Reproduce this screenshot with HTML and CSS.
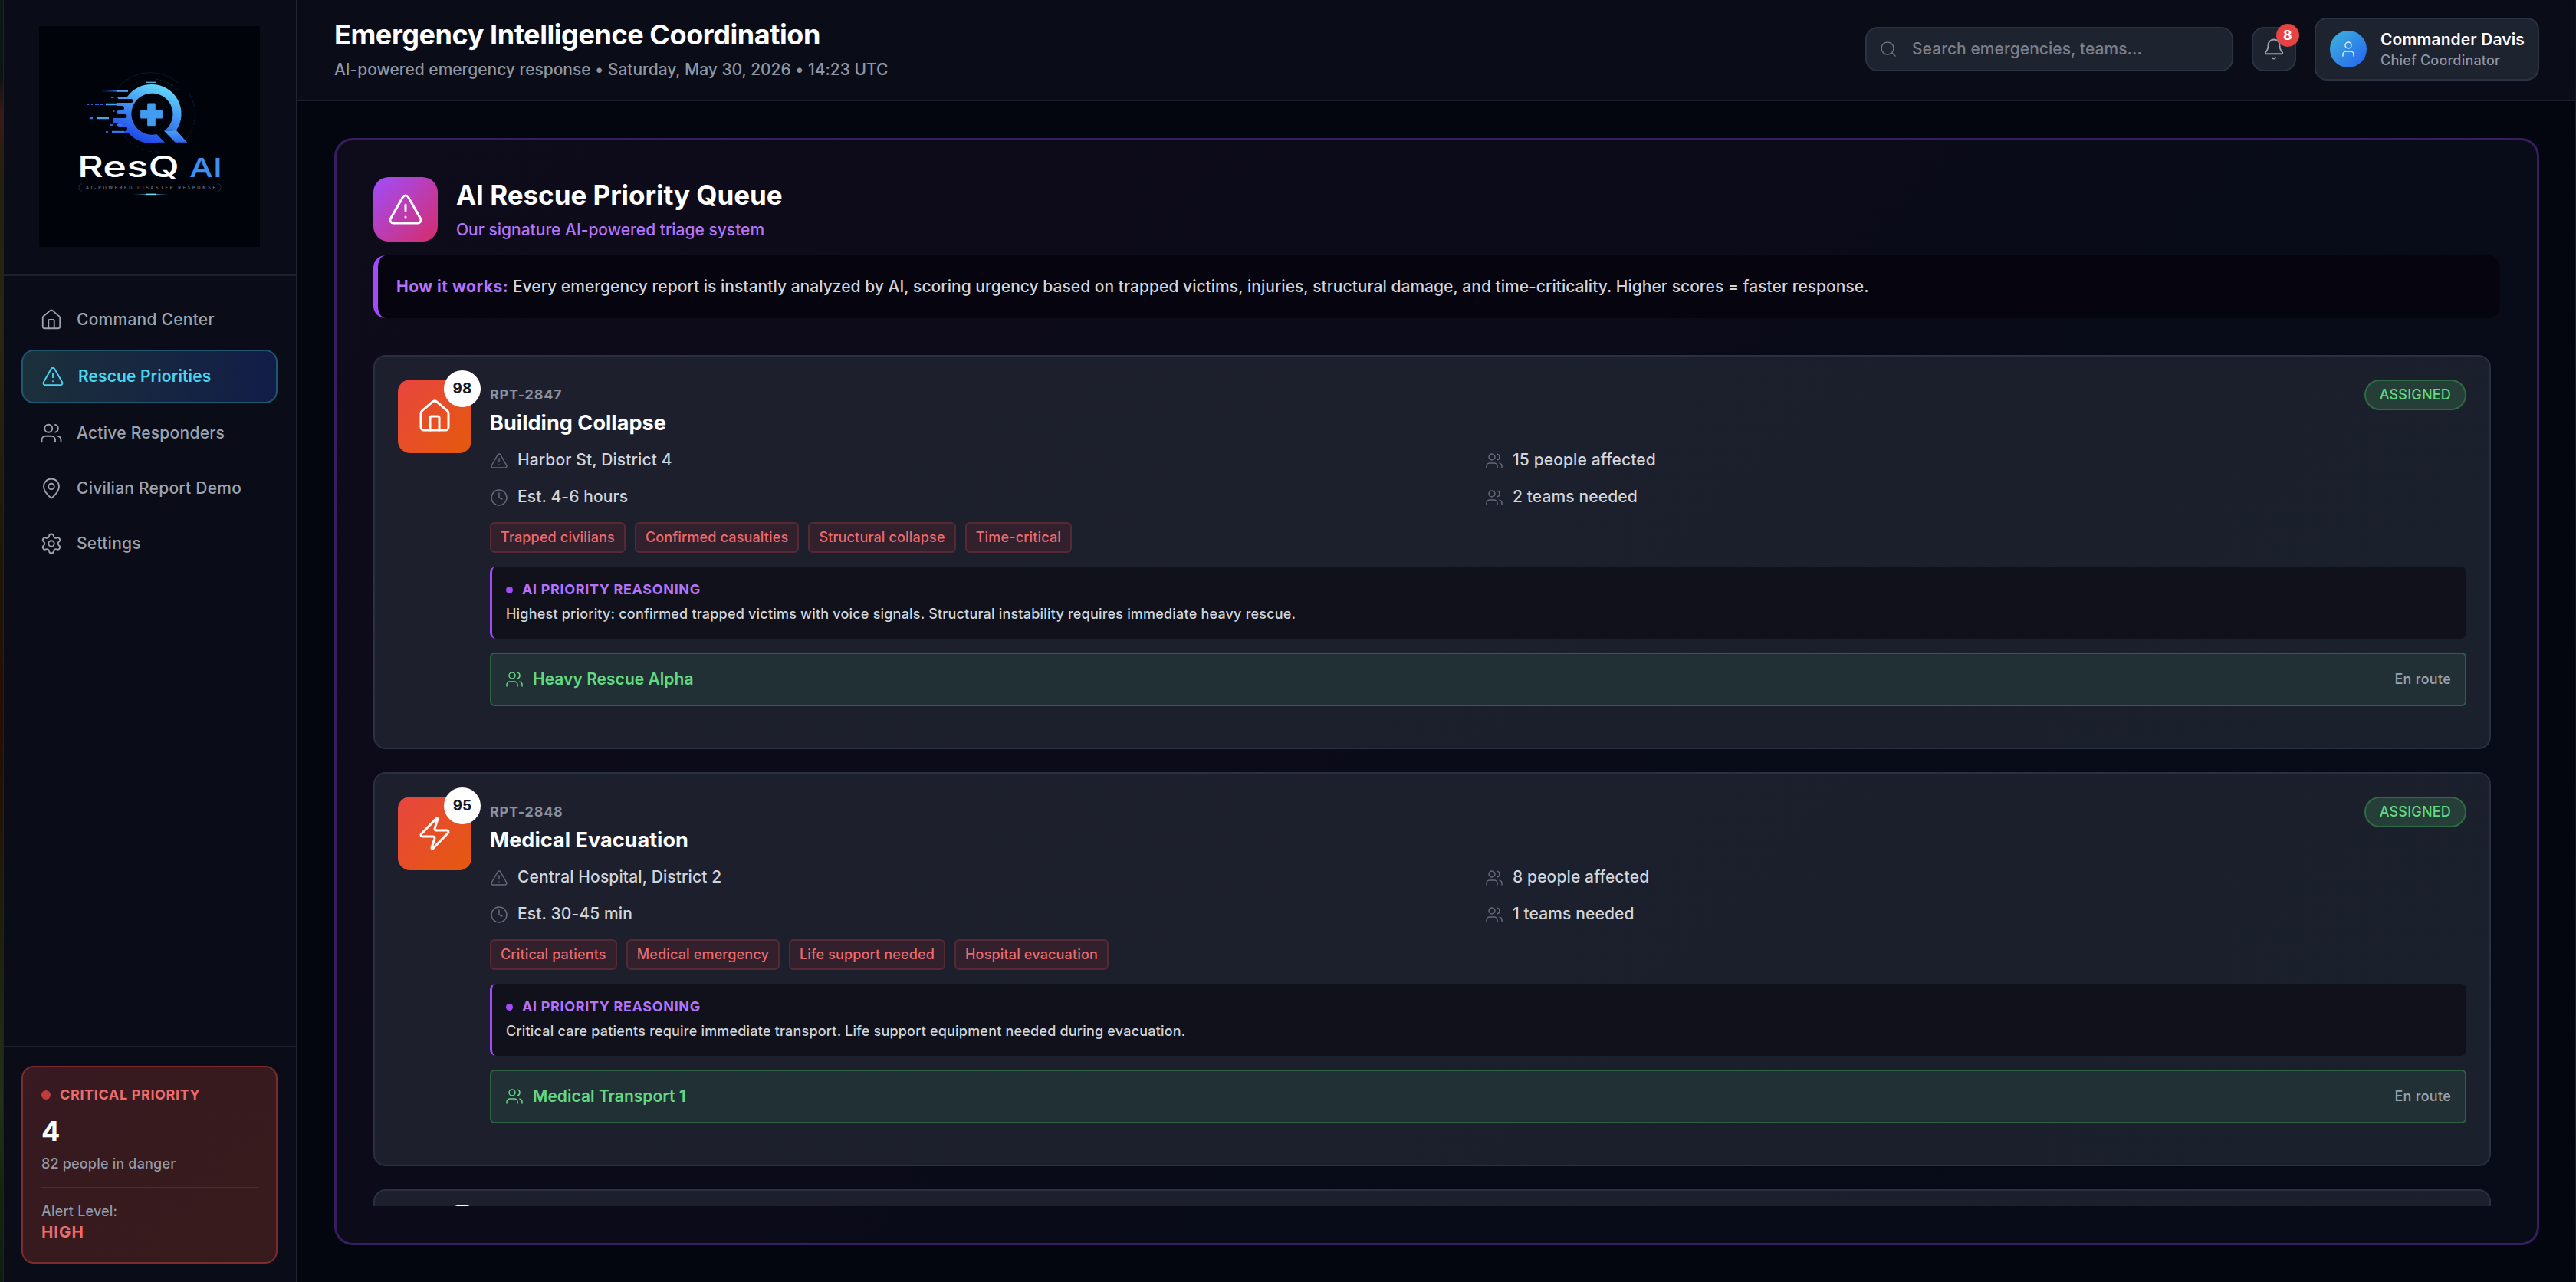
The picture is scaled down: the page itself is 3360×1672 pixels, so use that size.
FILE: index.html
```
<!DOCTYPE html>
<html lang="en">
<head>
    <meta charset="UTF-8">
    <meta name="viewport" content="width=device-width, initial-scale=1.0">
    <title>ResQ AI - Rescue Priorities</title>
    <link rel="stylesheet" href="styles.css">
</head>
<body>
    <svg class="sprite" aria-hidden="true">
        <symbol id="i-home" viewBox="0 0 24 24"><path d="M15 21v-8a1 1 0 0 0-1-1h-4a1 1 0 0 0-1 1v8"/><path d="M3 10a2 2 0 0 1 .709-1.528l7-5.999a2 2 0 0 1 2.582 0l7 5.999A2 2 0 0 1 21 10v9a2 2 0 0 1-2 2H5a2 2 0 0 1-2-2z"/></symbol>
        <symbol id="i-alert" viewBox="0 0 24 24"><path d="m21.73 18-8-14a2 2 0 0 0-3.48 0l-8 14A2 2 0 0 0 4 21h16a2 2 0 0 0 1.73-3"/><path d="M12 9v4"/><path d="M12 17h.01"/></symbol>
        <symbol id="i-users" viewBox="0 0 24 24"><path d="M16 21v-2a4 4 0 0 0-4-4H6a4 4 0 0 0-4 4v2"/><circle cx="9" cy="7" r="4"/><path d="M22 21v-2a4 4 0 0 0-3-3.87"/><path d="M16 3.13a4 4 0 0 1 0 7.75"/></symbol>
        <symbol id="i-pin" viewBox="0 0 24 24"><path d="M20 10c0 4.993-5.539 10.193-7.399 11.799a1 1 0 0 1-1.202 0C9.539 20.193 4 14.993 4 10a8 8 0 0 1 16 0"/><circle cx="12" cy="10" r="3"/></symbol>
        <symbol id="i-settings" viewBox="0 0 24 24"><path d="M9.671 4.136a2.34 2.34 0 0 1 4.659 0 2.34 2.34 0 0 0 3.319 1.915 2.34 2.34 0 0 1 2.33 4.033 2.34 2.34 0 0 0 0 3.831 2.34 2.34 0 0 1-2.33 4.033 2.34 2.34 0 0 0-3.319 1.915 2.34 2.34 0 0 1-4.659 0 2.34 2.34 0 0 0-3.32-1.915 2.34 2.34 0 0 1-2.33-4.033 2.34 2.34 0 0 0 0-3.831A2.34 2.34 0 0 1 6.35 6.051a2.34 2.34 0 0 0 3.319-1.915"/><circle cx="12" cy="12" r="3"/></symbol>
        <symbol id="i-search" viewBox="0 0 24 24"><circle cx="11" cy="11" r="8"/><path d="m21 21-4.34-4.34"/></symbol>
        <symbol id="i-bell" viewBox="0 0 24 24"><path d="M10.268 21a2 2 0 0 0 3.464 0"/><path d="M3.262 15.326A1 1 0 0 0 4 17h16a1 1 0 0 0 .74-1.673C19.41 13.956 18 12.499 18 8A6 6 0 0 0 6 8c0 4.499-1.411 5.956-2.738 7.326"/></symbol>
        <symbol id="i-user" viewBox="0 0 24 24"><path d="M19 21v-2a4 4 0 0 0-4-4H9a4 4 0 0 0-4 4v2"/><circle cx="12" cy="7" r="4"/></symbol>
        <symbol id="i-clock" viewBox="0 0 24 24"><circle cx="12" cy="12" r="10"/><path d="M12 6v6l4 2"/></symbol>
        <symbol id="i-zap" viewBox="0 0 24 24"><path d="M4 14a1 1 0 0 1-.78-1.63l9.9-10.2a.5.5 0 0 1 .86.46l-1.92 6.02A1 1 0 0 0 13 10h7a1 1 0 0 1 .78 1.63l-9.9 10.2a.5.5 0 0 1-.86-.46l1.92-6.02A1 1 0 0 0 11 14z"/></symbol>
    </svg>

    <div class="app">
        <aside class="sidebar">
            <div class="brand">
                <svg class="logo" viewBox="0 0 288 288">
                    <defs>
                        <linearGradient id="ring" x1="0.75" y1="0" x2="0.35" y2="1">
                            <stop offset="0" stop-color="#66dcf8"/>
                            <stop offset="0.5" stop-color="#3f8cf4"/>
                            <stop offset="1" stop-color="#1c40e4"/>
                        </linearGradient>
                        <linearGradient id="tail" x1="0" y1="0" x2="0" y2="1">
                            <stop offset="0" stop-color="#4b9ff6"/>
                            <stop offset="1" stop-color="#2c6bee"/>
                        </linearGradient>
                        <linearGradient id="dash" x1="0" x2="1">
                            <stop offset="0" stop-color="#1d3fb0" stop-opacity="0.1"/>
                            <stop offset="1" stop-color="#3b82e8"/>
                        </linearGradient>
                        <linearGradient id="glow" x1="0" x2="1">
                            <stop offset="0" stop-color="#2a6f9e" stop-opacity="0"/>
                            <stop offset="0.5" stop-color="#6fdcf8"/>
                            <stop offset="1" stop-color="#2a6f9e" stop-opacity="0"/>
                        </linearGradient>
                    </defs>
                    <rect width="288" height="288" fill="#01030b"/>
                    <g fill="none" stroke="#0d2238" stroke-width="0.7">
                        <path d="M101 83a55 55 0 0 1 80-9"/>
                        <path d="M195 86a54 54 0 0 1-3 62" stroke-dasharray="9 3"/>
                        <path d="M112 144a54 54 0 0 0 44 20" stroke-dasharray="5 4"/>
                        <path d="M153 69q18 4 29 15" stroke="#2d4255" stroke-dasharray="1.5 1"/>
                    </g>
                    <path d="M140 73.300h12" stroke="#52a9cc" stroke-width="1.400"/>
                    <!-- ring of the Q with the cut on its lower right -->
                    <path d="M146.500 76A38.500 38.500 0 0 1 179 136L163 136.700A27 27 0 1 0 153.300 141L164 151.700H155A38.500 38.500 0 0 1 117 140H105a1.500 1.500 0 0 1 0-3H112a2.500 2.500 0 0 0 0-6H105a2.500 2.500 0 0 1 0-5H96V120H112a2.500 2.500 0 0 0 0-5H104a2.500 2.500 0 0 1 0-5H108a2.500 2.500 0 0 0 0-6H102V100H120a2 2 0 0 0 0-5H104a1.500 1.500 0 0 1 0-3H115A38.500 38.500 0 0 1 146.500 76Z" fill="url(#ring)"/>
                    <path d="M163 136.700L179 136L193.300 151.700H177.700Z" fill="url(#tail)"/>
                    <path d="M141.700 101h9.600v9.500h9.400v9.500h-9.400v9.700h-9.600V120h-9V110.500h9z" fill="#419cf0" stroke="#419cf0" stroke-linejoin="round"/>
                    <rect x="82" y="84" width="22" height="1.600" fill="url(#dash)"/>
                    <rect x="102" y="83.200" width="14" height="2.600" fill="#4fa4ee"/>
                    <path d="M94 93h3.500M63 102h2.500M68 102h2M73 102h5M80 102h3M96 111h2.500M92 129h4.500M87 138h3" stroke="#2a5fd8" stroke-width="2.200"/>
                    <path d="M87 102h15M75 120h16" stroke="#48a3e8" stroke-width="2.600"/>
                    <path d="M67 120h3M95 138h16M101 129h7" stroke="#3279e4" stroke-width="2.400"/>
                    <text class="logo-name" x="50" y="197" textLength="133" lengthAdjust="spacingAndGlyphs">ResQ</text>
                    <text class="logo-ai" x="196" y="197" textLength="43" lengthAdjust="spacingAndGlyphs">AI</text>
                    <path d="M56 206h-2l-2 2v5l2 2h2M232 206h3l2 2v5l-2 2h-3" fill="none" stroke="#102a48"/>
                    <text class="logo-tag" x="61" y="213" textLength="169">AI-POWERED DISASTER RESPONSE</text>
                    <rect x="122" y="219" width="48" height="1" fill="url(#glow)"/>
                    <rect x="140" y="218.600" width="12" height="1.600" fill="#6fdcf8"/>
                </svg>
            </div>
            <nav class="nav">
                <a class="nav-item"><svg class="icon"><use href="#i-home"/></svg>Command Center</a>
                <a class="nav-item active"><svg class="icon"><use href="#i-alert"/></svg>Rescue Priorities</a>
                <a class="nav-item"><svg class="icon"><use href="#i-users"/></svg>Active Responders</a>
                <a class="nav-item"><svg class="icon"><use href="#i-pin"/></svg>Civilian Report Demo</a>
                <a class="nav-item"><svg class="icon"><use href="#i-settings"/></svg>Settings</a>
            </nav>
            <div class="sidebar-footer">
                <div class="critical">
                    <div class="critical-title"><span class="critical-dot"></span>CRITICAL PRIORITY</div>
                    <div class="critical-count">4</div>
                    <div class="critical-text">82 people in danger</div>
                    <div class="alert-level">
                        <div class="critical-text">Alert Level:</div>
                        <div class="alert-value">HIGH</div>
                    </div>
                </div>
            </div>
        </aside>

        <div class="content">
            <header class="header">
                <div>
                    <h1>Emergency Intelligence Coordination</h1>
                    <p class="subtitle">AI-powered emergency response • Saturday, May 30, 2026 • 14:23 UTC</p>
                </div>
                <div class="header-right">
                    <div class="search">
                        <svg class="icon icon-sm"><use href="#i-search"/></svg>
                        <input type="text" placeholder="Search emergencies, teams...">
                    </div>
                    <div class="bell">
                        <svg class="icon"><use href="#i-bell"/></svg>
                        <span class="bell-badge">8</span>
                    </div>
                    <div class="profile">
                        <div class="avatar"><svg class="icon icon-sm"><use href="#i-user"/></svg></div>
                        <div class="profile-text">
                            <div class="profile-name">Commander Davis</div>
                            <div class="profile-role">Chief Coordinator</div>
                        </div>
                    </div>
                </div>
            </header>

            <main class="main">
                <section class="panel">
                    <div class="panel-head">
                        <div class="panel-icon"><svg class="icon"><use href="#i-alert"/></svg></div>
                        <div>
                            <h2>AI Rescue Priority Queue</h2>
                            <p class="panel-sub">Our signature AI-powered triage system</p>
                        </div>
                    </div>
                    <div class="how"><strong>How it works:</strong> Every emergency report is instantly analyzed by AI, scoring urgency based on trapped victims, injuries, structural damage, and time-criticality. Higher scores = faster response.</div>

                    <div class="queue">
                        <article class="card">
                            <div class="card-icon"><svg class="icon"><use href="#i-home"/></svg><span class="score">98</span></div>
                            <div class="card-body">
                                <div class="card-top"><span class="card-id">RPT-2847</span><span class="status">ASSIGNED</span></div>
                                <h3>Building Collapse</h3>
                                <div class="info">
                                    <div><svg class="icon icon-sm"><use href="#i-alert"/></svg>Harbor St, District 4</div>
                                    <div><svg class="icon icon-sm"><use href="#i-users"/></svg>15 people affected</div>
                                    <div><svg class="icon icon-sm"><use href="#i-clock"/></svg>Est. 4-6 hours</div>
                                    <div><svg class="icon icon-sm"><use href="#i-users"/></svg>2 teams needed</div>
                                </div>
                                <div class="tags">
                                    <span>Trapped civilians</span>
                                    <span>Confirmed casualties</span>
                                    <span>Structural collapse</span>
                                    <span>Time-critical</span>
                                </div>
                                <div class="reason">
                                    <div class="reason-title">AI PRIORITY REASONING</div>
                                    <p>Highest priority: confirmed trapped victims with voice signals. Structural instability requires immediate heavy rescue.</p>
                                </div>
                                <div class="team"><svg class="icon icon-sm"><use href="#i-users"/></svg>Heavy Rescue Alpha<span class="team-status">En route</span></div>
                            </div>
                        </article>

                        <article class="card">
                            <div class="card-icon"><svg class="icon"><use href="#i-zap"/></svg><span class="score">95</span></div>
                            <div class="card-body">
                                <div class="card-top"><span class="card-id">RPT-2848</span><span class="status">ASSIGNED</span></div>
                                <h3>Medical Evacuation</h3>
                                <div class="info">
                                    <div><svg class="icon icon-sm"><use href="#i-alert"/></svg>Central Hospital, District 2</div>
                                    <div><svg class="icon icon-sm"><use href="#i-users"/></svg>8 people affected</div>
                                    <div><svg class="icon icon-sm"><use href="#i-clock"/></svg>Est. 30-45 min</div>
                                    <div><svg class="icon icon-sm"><use href="#i-users"/></svg>1 teams needed</div>
                                </div>
                                <div class="tags">
                                    <span>Critical patients</span>
                                    <span>Medical emergency</span>
                                    <span>Life support needed</span>
                                    <span>Hospital evacuation</span>
                                </div>
                                <div class="reason">
                                    <div class="reason-title">AI PRIORITY REASONING</div>
                                    <p>Critical care patients require immediate transport. Life support equipment needed during evacuation.</p>
                                </div>
                                <div class="team"><svg class="icon icon-sm"><use href="#i-users"/></svg>Medical Transport 1<span class="team-status">En route</span></div>
                            </div>
                        </article>

                        <article class="card">
                            <div class="card-icon"><span class="score"></span></div>
                        </article>
                    </div>
                </section>
            </main>
        </div>
    </div>
</body>
</html>
```
FILE: styles.css
```
* {
    box-sizing: border-box;
    margin: 0;
    padding: 0;
}
body {
    height: 1672px;
    overflow: hidden;
    background: #03060e;
    color: #fff;
    font-family: Inter, "Liberation Sans", sans-serif;
    font-size: 21px;
    font-weight: 450;
    line-height: 30px;
    letter-spacing: 0.1px;
}
.sprite {
    display: none;
}
.icon {
    width: 30px;
    height: 30px;
    flex-shrink: 0;
    fill: none;
    stroke: currentColor;
    stroke-width: 1.5;
    stroke-linecap: round;
    stroke-linejoin: round;
}
.icon-sm {
    width: 24px;
    height: 24px;
}
.app {
    display: flex;
    height: 1672px;
    border-left: 4px solid #1f2110;
    border-image: linear-gradient(#0c1a12 0, #0c1410 6%, #3a1a18 9%, #22200f 14%, #2b2614 26%, #1d1808 42%, #260f06 54%, #231205 62%, #1d230f 75%, #24301a 86%, #16240f 93%, #0f1d10) 1;
    border-right: 1px solid #22262f;
    border-top: 0;
    border-bottom: 0;
}

/* sidebar */
.sidebar {
    display: flex;
    flex-direction: column;
    width: 384px;
    flex-shrink: 0;
    background: #0a0d17;
    border-left: 1px solid #1e222d;
    border-right: 2px solid #1e2430;
}
.brand {
    display: flex;
    height: 360px;
    padding: 34px 0 0 46px;
    border-bottom: 2px solid #1c212d;
}
.logo {
    width: 288px;
    height: 288px;
}
.logo-name {
    font-size: 38px;
    font-weight: 500;
    fill: #fff;
}
.logo-ai {
    font-size: 34px;
    font-weight: 500;
    fill: #3e8ff2;
}
.logo-tag {
    font-size: 5.5px;
    font-weight: 500;
    fill: #7d8794;
}
.nav {
    display: flex;
    flex-direction: column;
    gap: 6px;
    flex: 1;
    padding: 24px 24px 0 23px;
}
.nav-item {
    display: flex;
    align-items: center;
    gap: 18px;
    height: 66px;
    padding: 0 24px;
    color: #9ca3af;
    font-weight: 500;
    letter-spacing: 0.25px;
}
.nav-item.active {
    height: 70px;
    border: 2px solid #1f5672;
    border-radius: 16px;
    background: linear-gradient(90deg, #1b303b, #121d47);
    color: #4cd3ef;
    font-weight: 600;
    letter-spacing: 0.11px;
}
.sidebar-footer {
    padding: 24px 24px 24px 23px;
    border-top: 2px solid #1c212d;
}
.critical {
    height: 258px;
    padding: 22px 24px 0;
    border: 2px solid #7f2b2e;
    border-radius: 16px;
    background: linear-gradient(135deg, #371a22, #361a1e 40%, #381b1c);
}
.critical-title {
    display: flex;
    align-items: center;
    gap: 12px;
    height: 28px;
    color: #ed6b6b;
    font-size: 18px;
    font-weight: 700;
    letter-spacing: 0.63px;
}
.critical-dot {
    width: 12px;
    height: 12px;
    border-radius: 50%;
    background: #c13b3c;
}
.critical-count {
    margin-top: 11px;
    font-size: 36px;
    font-weight: 700;
    line-height: 44px;
}
.critical-text {
    margin-top: 9px;
    color: #9499a5;
    font-size: 18px;
    line-height: 24px;
    letter-spacing: 0.18px;
}
.alert-level {
    margin-top: 18px;
    padding-top: 9px;
    border-top: 2px solid #5f2526;
}
.alert-value {
    margin-top: 1px;
    color: #ed6b6b;
    font-weight: 700;
    font-size: 20.5px;
    line-height: 28px;
    letter-spacing: 1px;
}

/* header */
.content {
    display: flex;
    flex-direction: column;
    flex: 1;
    min-width: 0;
}
.header {
    display: flex;
    align-items: flex-start;
    justify-content: space-between;
    height: 132px;
    padding: 23px 47px 0 48px;
    border-bottom: 2px solid #1c212d;
    background: #0a0d17;
}
h1 {
    font-size: 36px;
    font-weight: 700;
    line-height: 45px;
    letter-spacing: -0.425px;
}
.subtitle {
    margin-top: 7px;
    color: #8f96a3;
    line-height: 32px;
    letter-spacing: -0.03px;
}
.header-right {
    display: flex;
    align-items: center;
    gap: 24px;
}
.search {
    display: flex;
    align-items: center;
    gap: 19px;
    width: 480px;
    height: 58px;
    padding: 0 16px;
    border: 2px solid #2b3242;
    border-radius: 16px;
    background: #1e2330;
    color: #6b7280;
}
.search input {
    flex: 1;
    border: 0;
    outline: 0;
    background: none;
    color: #fff;
    font: inherit;
    letter-spacing: 0.05px;
}
.search input::placeholder {
    color: #7b7f88;
}
.bell {
    position: relative;
    display: flex;
    align-items: center;
    justify-content: center;
    width: 58px;
    height: 58px;
    border: 2px solid #2b3242;
    border-radius: 16px;
    background: #1e2330;
    color: #9ca3af;
}
.bell-badge {
    position: absolute;
    top: -6px;
    right: -6px;
    width: 30px;
    height: 30px;
    border-radius: 50%;
    background: #e84343;
    color: #fff;
    font-size: 18px;
    font-weight: 700;
    text-align: center;
}
.profile {
    display: flex;
    align-items: center;
    gap: 17px;
    width: 293px;
    height: 82px;
    padding: 0 10px 0 18px;
    border: 2px solid #2b3242;
    border-radius: 16px;
    background: #1e2330;
}
.profile-text {
    padding: 2px 0 0 1px;
}
.avatar {
    display: flex;
    align-items: center;
    justify-content: center;
    width: 48px;
    height: 48px;
    border-radius: 50%;
    background: linear-gradient(135deg, #3eb4da, #2563f0);
    color: #e4efff;
}
.profile-name {
    font-weight: 600;
    line-height: 28px;
    white-space: nowrap;
}
.profile-role {
    color: #8f96a3;
    font-size: 18px;
    line-height: 26px;
    letter-spacing: 0.2px;
}

/* priority queue */
.main {
    flex: 1;
    min-height: 0;
    padding: 48px 47px 48px 48px;
}
.panel {
    display: flex;
    flex-direction: column;
    height: 100%;
    padding: 48px;
    border: 3px solid #371e60;
    border-radius: 24px;
    background: linear-gradient(135deg, #0e0b1a, #0c0b1a 40%, #080b18 60%, #070c18);
}
.panel-head {
    display: flex;
    align-items: center;
    gap: 24px;
}
.panel-icon {
    display: flex;
    align-items: center;
    justify-content: center;
    width: 84px;
    height: 84px;
    border-radius: 20px;
    background: linear-gradient(135deg, #a04dfb, #d72c6a);
}
.panel-icon .icon {
    width: 48px;
    height: 48px;
}
h2 {
    font-size: 35px;
    font-weight: 700;
    line-height: 44px;
    letter-spacing: -0.03px;
}
.panel-sub {
    margin-top: 9px;
    color: #b573fa;
    letter-spacing: 0;
}
.how {
    height: 82px;
    margin-top: 18px;
    padding-left: 24px;
    border-left: 6px solid #a14bfa;
    border-radius: 16px;
    background: #06040f;
    color: #d1d5db;
    line-height: 82px;
    letter-spacing: 0.03px;
}
.how strong {
    color: #b573fa;
    font-weight: 700;
    letter-spacing: 0.5px;
}
.queue {
    flex: 1;
    min-height: 0;
    margin-top: 48px;
    padding-right: 12px;
    overflow: hidden;
}
.card {
    display: flex;
    gap: 24px;
    height: 514px;
    margin-bottom: 30px;
    padding: 30px;
    border: 2px solid #2a3041;
    border-radius: 16px;
    background: linear-gradient(135deg, #1d1f2d, #1c1f2c 50%, #1a202c);
}
.card-icon {
    position: relative;
    display: flex;
    align-items: center;
    justify-content: center;
    width: 96px;
    height: 96px;
    border-radius: 16px;
    background: linear-gradient(135deg, #e84541, #e5590b);
}
.card-icon .icon {
    width: 48px;
    height: 48px;
}
.score {
    position: absolute;
    top: -12px;
    right: -12px;
    width: 48px;
    height: 48px;
    border-radius: 50%;
    background: #fff;
    color: #111827;
    font-size: 19px;
    font-weight: 700;
    line-height: 48px;
    text-align: center;
}
.card-body {
    flex: 1;
}
.card-top {
    display: flex;
    align-items: center;
    justify-content: space-between;
    height: 40px;
}
.card-id {
    color: #8b909c;
    font-size: 18px;
    font-weight: 700;
    letter-spacing: 0.75px;
}
.status {
    height: 40px;
    padding: 0 18px;
    border: 2px solid #2f6a45;
    border-radius: 20px;
    background: #253e38;
    color: #62d982;
    font-size: 18px;
    font-weight: 500;
    line-height: 36px;
    letter-spacing: 0.2px;
}
h3 {
    font-size: 27px;
    font-weight: 700;
    line-height: 33px;
    letter-spacing: 0.05px;
}
.info {
    display: grid;
    grid-template-columns: 1fr 1fr;
    gap: 18px;
    margin: 17px 0 18px;
    color: #d1d5db;
    letter-spacing: 0.12px;
}
.info div {
    display: flex;
    align-items: center;
    gap: 12px;
    height: 30px;
}
.info .icon {
    color: #646a78;
    margin-top: 2px;
}
.tags {
    display: flex;
    gap: 12px;
}
.tags span {
    height: 40px;
    padding: 0 12px;
    border: 2px solid #572a33;
    border-radius: 6px;
    background: #32202d;
    color: #ec6a6c;
    font-size: 18px;
    font-weight: 500;
    line-height: 36px;
    letter-spacing: 0.16px;
}
.reason {
    height: 94px;
    margin: 18px 0;
    padding: 16px 18px 0;
    border-left: 3px solid #a14bfa;
    border-radius: 8px;
    background: #10111a;
}
.reason-title {
    display: flex;
    align-items: center;
    gap: 12px;
    color: #b573fa;
    font-size: 18px;
    font-weight: 700;
    line-height: 28px;
    letter-spacing: 0.65px;
}
.reason-title::before {
    content: "";
    width: 9px;
    height: 9px;
    border-radius: 50%;
    background: #a14bfa;
}
.reason p {
    margin-top: 3px;
    color: #d1d5db;
    font-size: 18px;
    line-height: 30px;
    letter-spacing: 0.2px;
}
.team {
    display: flex;
    align-items: center;
    gap: 12px;
    height: 70px;
    padding: 0 18px;
    border: 2px solid #2d6340;
    border-radius: 6px;
    background: #213034;
    color: #62d982;
    font-weight: 600;
    letter-spacing: 0.03px;
}
.team-status {
    margin-left: auto;
    color: #9ca3af;
    font-size: 18px;
    font-weight: 450;
    letter-spacing: 0.28px;
}
```
